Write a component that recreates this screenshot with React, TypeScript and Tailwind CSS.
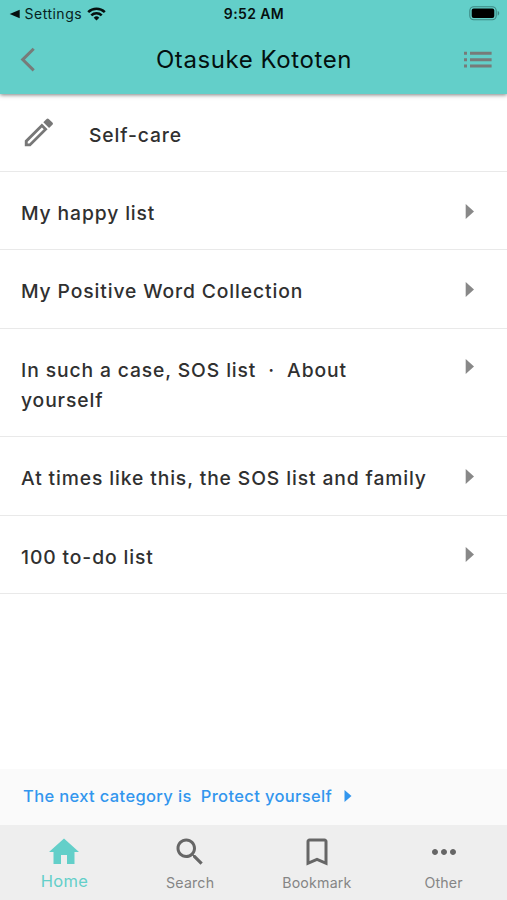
interface Item {
  label: string;
  wrapped?: boolean;
}

interface Tab {
  label: string;
  path: string;
  active?: boolean;
}

const items: Item[] = [
  { label: "My happy list" },
  { label: "My Positive Word Collection" },
  { label: "In such a case, SOS list \u00a0·\u00a0 About yourself", wrapped: true },
  { label: "At times like this, the SOS list and family" },
  { label: "100 to-do list" },
];

const tabs: Tab[] = [
  { label: "Home", path: "M10 20v-6h4v6h5v-8h3L12 3 2 12h3v8z", active: true },
  {
    label: "Search",
    path: "M15.5 14h-.79l-.28-.27C15.41 12.59 16 11.11 16 9.5 16 5.91 13.09 3 9.5 3S3 5.91 3 9.5 5.91 16 9.5 16c1.61 0 3.09-.59 4.23-1.57l.27.28v.79l5 4.99L20.49 19l-4.99-5zm-6 0C7.01 14 5 11.99 5 9.5S7.01 5 9.5 5 14 7.01 14 9.5 11.99 14 9.5 14z",
  },
  {
    label: "Bookmark",
    path: "M17 3H7c-1.1 0-1.99.9-1.99 2L5 21l7-3 7 3V5c0-1.1-.9-2-2-2zm0 15l-5-2.18L7 18V5h10v13z",
  },
  {
    label: "Other",
    path: "M6 10c-1.1 0-2 .9-2 2s.9 2 2 2 2-.9 2-2-.9-2-2-2zm12 0c-1.1 0-2 .9-2 2s.9 2 2 2 2-.9 2-2-.9-2-2-2zm-6 0c-1.1 0-2 .9-2 2s.9 2 2 2 2-.9 2-2-.9-2-2-2z",
  },
];

function StatusBar() {
  return (
    <div className="grid h-[27px] grid-cols-3 items-center pr-[7px] pl-[9px] text-[#062220]">
      <div className="flex items-center">
        <svg width="11" height="10" viewBox="0 0 11 10" fill="#06100f">
          <path d="M.7 5 10.7.7v8.6z" />
        </svg>
        <span className="ml-[4.5px] text-[14px] leading-none tracking-[0.5px]">Settings</span>
        <svg className="ml-[5px]" width="19" height="14" viewBox="0 0 19 14" fill="none" stroke="#06100f" strokeWidth="2.6">
          <path d="M1.2 5.1a12 12 0 0 1 16.6 0" />
          <path d="M4.3 8.4a7.5 7.5 0 0 1 10.4 0" />
          <path d="M6.7 10.7a4 4 0 0 1 5.6 0L9.5 13.6z" fill="#06100f" stroke="none" />
        </svg>
      </div>
      <div className="pr-px text-center text-[14px] leading-none font-semibold tracking-[0.4px] text-[#06100f]">9:52 AM</div>
      <div className="flex justify-end">
        <svg width="31" height="15" viewBox="0 0 31 15">
          <rect x=".8" y=".8" width="26.4" height="12.9" rx="4" fill="none" stroke="#3d8883" strokeWidth="1.1" />
          <rect x="2.7" y="2.6" width="22.6" height="9.4" rx="2" fill="#000" />
          <path d="M28.7 5v4.5c2-.7 2-3.8 0-4.5z" fill="#3d8883" />
        </svg>
      </div>
    </div>
  );
}

function Header() {
  return (
    <header className="relative h-[94px] shrink-0 bg-[#63cfc9] shadow-[0_1px_4px_rgba(0,0,0,0.5)]">
      <StatusBar />
      <div className="grid h-[66px] grid-cols-[1fr_auto_1fr] items-center pr-[15px] pl-[16px]">
        <svg className="ml-[4px]" width="16" height="26" viewBox="0 0 16 26" fill="none" stroke="#777b79" strokeWidth="3">
          <path d="M13.7 1.8 2.7 12.6l11 10.8" />
        </svg>
        <h1 className="text-[24px] leading-none tracking-[0.58px] text-[#03100f]">Otasuke Kototen</h1>
        <svg className="ml-auto" width="29" height="18" viewBox="0 0 29 18" fill="#777b79">
          <path d="M1 .8h3v3H1zM7 .8h21.6v3H7zM1 7.2h3v3H1zM7 7.2h21.6v3H7zM1 13.5h3v3H1zM7 13.5h21.6v3H7z" />
        </svg>
      </div>
    </header>
  );
}

function MenuList() {
  return (
    <main className="flex-1 text-[19.3px] leading-[30.2px] font-medium tracking-[0.88px] text-[#303030]">
      <div className="flex h-[78px] items-center border-b border-[#e9e9e9] pl-[24px]">
        <svg width="29" height="29" viewBox="0 0 29 29" fill="#777">
          <path fillRule="evenodd" d="M.8 22.5v5.7h5.7L23.6 11.3l-5.7-5.7zM3.7 25.4v-1.7L17.9 9.5l1.8 1.8L5.4 25.4z" />
          <path d="M19.3 4.2 22.6.9a1.5 1.5 0 0 1 2.1 0l3.7 3.7a1.5 1.5 0 0 1 0 2.1L25.1 10z" />
        </svg>
        <span className="ml-[36px] pt-[5px]">Self-care</span>
      </div>
      {items.map((item) => (
        <div
          key={item.label}
          className="flex items-start border-b border-[#e9e9e9] pt-[26px] pr-[32px] pb-[21.2px] pl-[21px]"
        >
          <span className="w-[409px]">{item.label}</span>
          <svg
            className={item.wrapped ? "mt-[4px] ml-auto" : "mt-[5.5px] ml-auto"}
            width="10"
            height="15"
            viewBox="0 0 10 15"
            fill="#888"
          >
            <path d="M.7 0 9 7.5.7 15z" />
          </svg>
        </div>
      ))}
    </main>
  );
}

function TabBar() {
  return (
    <nav className="grid h-[75px] shrink-0 grid-cols-4 bg-[#eee]">
      {tabs.map((tab) => (
        <button
          key={tab.label}
          className={
            tab.active
              ? "flex flex-col items-center pt-[9px] pl-[2px] text-[#63cfc9]"
              : "flex flex-col items-center pt-[9px] text-[#666]"
          }
        >
          <svg width="36" height="36" viewBox="0 0 24 24" fill="currentColor">
            <path d={tab.path} />
          </svg>
          <span
            className={
              tab.active
                ? "mt-px text-[16.5px] leading-[20px] tracking-[0.3px]"
                : "mt-[2.5px] text-[14.2px] leading-[20px] tracking-[0.2px] text-[#858585]"
            }
          >
            {tab.label}
          </span>
        </button>
      ))}
    </nav>
  );
}

export default function App() {
  return (
    <div className="flex h-[900px] w-[507px] flex-col overflow-hidden bg-white font-['Inter','Liberation_Sans',sans-serif]">
      <Header />
      <MenuList />
      <div className="flex h-[56px] shrink-0 items-center bg-[#fafafa] pb-[2px] pl-[23px] text-[16.5px] font-medium tracking-[0.36px] text-[#3296ee]">
        <span>The next category is</span>
        <span className="ml-[9px]">Protect yourself</span>
        <svg className="ml-[12px]" width="8" height="12" viewBox="0 0 8 12" fill="currentColor">
          <path d="M.5 0 7.5 6l-7 6z" />
        </svg>
      </div>
      <TabBar />
    </div>
  );
}
